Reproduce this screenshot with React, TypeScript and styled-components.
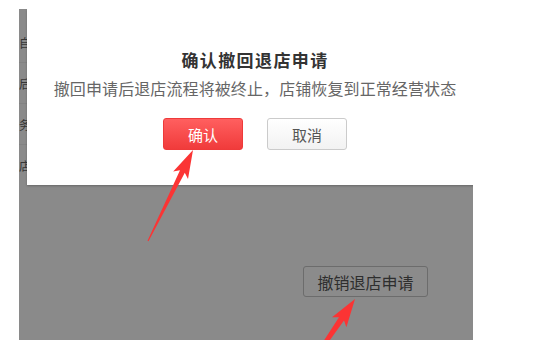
import React from "react";
import styled, { createGlobalStyle } from "styled-components";

const GlobalStyle = createGlobalStyle`
  html, body {
    margin: 0;
    padding: 0;
    background: #ffffff;
  }
  body {
    font-family: "Noto Sans CJK SC", "Liberation Sans", sans-serif;
  }
`;

const Page = styled.div`
  width: 546px;
  height: 358px;
  padding: 9px 0 0 19px;
  box-sizing: border-box;
  background: #ffffff;
`;

// the pasted screenshot, dimmed by the modal mask
const Shot = styled.div`
  position: relative;
  width: 454px;
  height: 331px;
  overflow: hidden;
  background: #8a8a8a;
  display: flex;
  flex-direction: column;
`;

const TopRow = styled.div`
  display: flex;
  flex-shrink: 0;
  height: 176px;
`;

const SideList = styled.ul`
  list-style: none;
  margin: 0;
  padding: 13px 0 0;
  width: 8px;
  flex-shrink: 0;
  overflow: hidden;
`;

const SideItem = styled.li`
  height: 40px;
  display: flex;
  align-items: center;
  font-size: 12px;
  color: #363636;
  border-bottom: 1px solid #828282;
  white-space: nowrap;
`;

const Dialog = styled.div`
  width: 456px;
  flex-shrink: 0;
  background: #ffffff;
  box-shadow: 0 1px 2px rgba(0, 0, 0, 0.25);
  display: flex;
  flex-direction: column;
  align-items: center;
  padding-top: 38px;
  box-sizing: border-box;
`;

const Title = styled.h2`
  margin: 0;
  font-size: 17px;
  line-height: 26px;
  font-weight: 700;
  letter-spacing: 1.4px;
  color: #333333;
`;

const Message = styled.p`
  margin: 3px 0 0;
  font-size: 16px;
  line-height: 24px;
  letter-spacing: 0.1px;
  color: #666666;
`;

const Actions = styled.div`
  display: flex;
  gap: 24px;
  margin-top: 18px;
`;

const DialogButton = styled.button<{ $primary?: boolean }>`
  width: 80px;
  height: 32px;
  border-radius: 3px;
  font-family: inherit;
  font-size: 15px;
  padding: 0;
  cursor: pointer;
  border: 1px solid ${(p) => (p.$primary ? "#ee3a3a" : "#cbcbcb")};
  color: ${(p) => (p.$primary ? "#ffffff" : "#555555")};
  background: ${(p) =>
    p.$primary
      ? "linear-gradient(#ff5f5f, #f03b3b)"
      : "linear-gradient(#ffffff, #f2f2f2)"};
`;

const Body = styled.div`
  flex: 1;
  display: flex;
  justify-content: flex-end;
  align-items: flex-start;
  padding: 81px 45px 0 0;
`;

const RevokeButton = styled.button`
  width: 125px;
  height: 31px;
  padding: 0;
  border: 1px solid #6c6c6c;
  border-radius: 3px;
  background: #8b8b8b;
  font-family: inherit;
  font-size: 16px;
  color: #2e2e2e;
`;

const Annotations = styled.svg`
  position: absolute;
  left: 0;
  top: 0;
  width: 454px;
  height: 331px;
  pointer-events: none;
`;

const sideRows = ["自", "后", "务", "店"];

export default function App() {
  return (
    <Page>
      <GlobalStyle />
      <Shot>
        <TopRow>
          <SideList>
            {sideRows.map((c) => (
              <SideItem key={c}>{c}</SideItem>
            ))}
          </SideList>
          <Dialog>
            <Title>确认撤回退店申请</Title>
            <Message>撤回申请后退店流程将被终止，店铺恢复到正常经营状态</Message>
            <Actions>
              <DialogButton $primary>确认</DialogButton>
              <DialogButton>取消</DialogButton>
            </Actions>
          </Dialog>
        </TopRow>
        <Body>
          <RevokeButton>撤销退店申请</RevokeButton>
        </Body>
        {/* red arrows drawn on the screenshot */}
        <Annotations viewBox="0 0 454 331">
          <polygon
            fill="#fb3434"
            points="174,141 169,170 165.8,163.8 129.5,232.3 128.5,231.7 161,161.2 154.2,162.6"
          />
          <polygon
            fill="#fb3434"
            points="336,290 327.4,318.2 325,311.4 292.2,357.2 289.6,355.2 320,308.2 313,308.2"
          />
        </Annotations>
      </Shot>
    </Page>
  );
}
